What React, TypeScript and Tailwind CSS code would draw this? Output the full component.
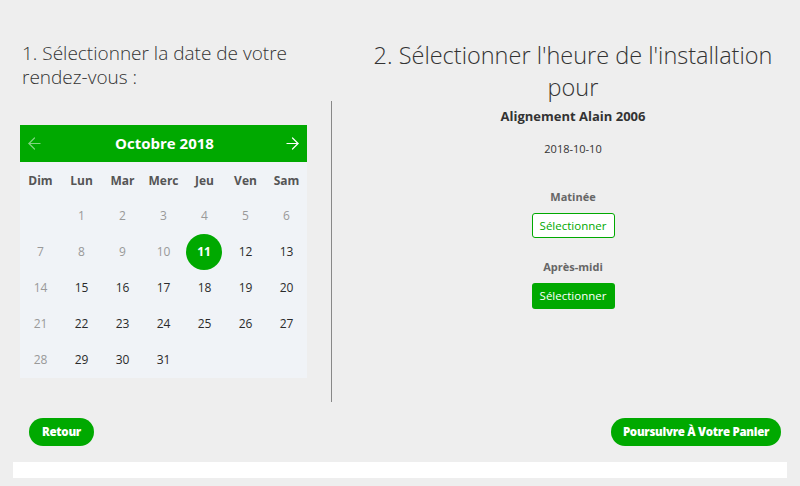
import React from "react";
import { ArrowLeft, ArrowRight } from "lucide-react";

const weekDays = ["Dim", "Lun", "Mar", "Merc", "Jeu", "Ven", "Sam"];

type Day = { n: number; past?: boolean } | null;

const weeks: Day[][] = [
  [null, 1, 2, 3, 4, 5, 6],
  [7, 8, 9, 10, 11, 12, 13],
  [14, 15, 16, 17, 18, 19, 20],
  [21, 22, 23, 24, 25, 26, 27],
  [28, 29, 30, 31, null, null, null],
].map((week) =>
  week.map((n, i) => (n === null ? null : { n, past: n <= 10 || i === 0 })),
);

const SELECTED = 11;

function Calendar() {
  return (
    <div className="w-[287px] bg-[#f0f3f7]">
      <div className="h-[37px] bg-[#00a900] flex items-center justify-between px-[5px]">
        <ArrowLeft size={19} strokeWidth={1.5} className="text-white opacity-50" />
        <span className="text-white font-bold text-[15px] pl-[2px]">Octobre 2018</span>
        <ArrowRight size={19} strokeWidth={1.5} className="text-white" />
      </div>
      <div className="grid grid-cols-7">
        {weekDays.map((d) => (
          <div
            key={d}
            className="h-[36px] pt-[1px] flex items-center justify-center text-[12px] font-bold text-[#555]"
          >
            {d}
          </div>
        ))}
        {weeks.flat().map((day, i) => (
          <div key={i} className="h-[36px] flex items-center justify-center">
            {day &&
              (day.n === SELECTED ? (
                <span className="w-[36px] h-[36px] mr-[1px] rounded-full bg-[#00a900] text-white font-bold text-[12px] flex items-center justify-center">
                  {day.n}
                </span>
              ) : (
                <span
                  className={
                    day.past ? "text-[12px] text-[#999]" : "text-[12px] text-[#2a2a2a]"
                  }
                >
                  {day.n}
                </span>
              ))}
          </div>
        ))}
      </div>
    </div>
  );
}

export default function App() {
  return (
    <div
      className="w-[800px] h-[486px] bg-[#eeeeee] flex flex-col text-[#333]"
      style={{ fontFamily: '"Open Sans", sans-serif' }}
    >
      <div className="flex items-start pt-[39px]">
        <div className="ml-[20px] w-[287px] pt-[2px]">
          <h1 className="text-[19px] leading-[24px] font-light text-[#333] pl-[2px]">
            1. Sélectionner la date de votre rendez-vous :
          </h1>
          <div className="mt-[36px]">
            <Calendar />
          </div>
        </div>
        <div className="ml-[24px] mt-[62px] h-[301px] w-px bg-[#888]" />
        <div className="flex-1 ml-[14px] flex flex-col items-center text-center">
          <h2 className="text-[23.5px] leading-[32px] font-light text-[#333]">
            2. Sélectionner l'heure de l'installation pour
          </h2>
          <p className="mt-[4px] text-[13px] leading-[18px] font-bold text-[#333]">
            Alignement Alain 2006
          </p>
          <p className="mt-[16px] text-[11px] leading-[16px] text-[#333]">2018-10-10</p>
          <p className="mt-[32px] text-[11px] leading-[16px] font-bold text-[#666]">
            Matinée
          </p>
          <button className="mt-[8px] w-[83px] h-[25px] rounded-[3px] border border-[#00a900] bg-white text-[#00a900] text-[11.5px]">
            Sélectionner
          </button>
          <p className="mt-[21px] text-[11px] leading-[16px] font-bold text-[#666]">
            Après-midi
          </p>
          <button className="mt-[8px] w-[83px] h-[26px] rounded-[3px] bg-[#00a900] text-white text-[11.5px]">
            Sélectionner
          </button>
        </div>
      </div>
      <div className="mt-auto flex justify-between px-[19px]">
        <button className="ml-[10px] h-[28px] w-[65px] rounded-full bg-[#00a900] text-white text-[11.5px] font-extrabold tracking-tight">
          Retour
        </button>
        <button className="h-[28px] w-[170px] rounded-full bg-[#00a900] text-white text-[11.5px] font-extrabold tracking-tight">
          Poursuivre À Votre Panier
        </button>
      </div>
      <div className="mx-[13px] mt-[16px] mb-[8px] h-[16px] bg-white" />
    </div>
  );
}
